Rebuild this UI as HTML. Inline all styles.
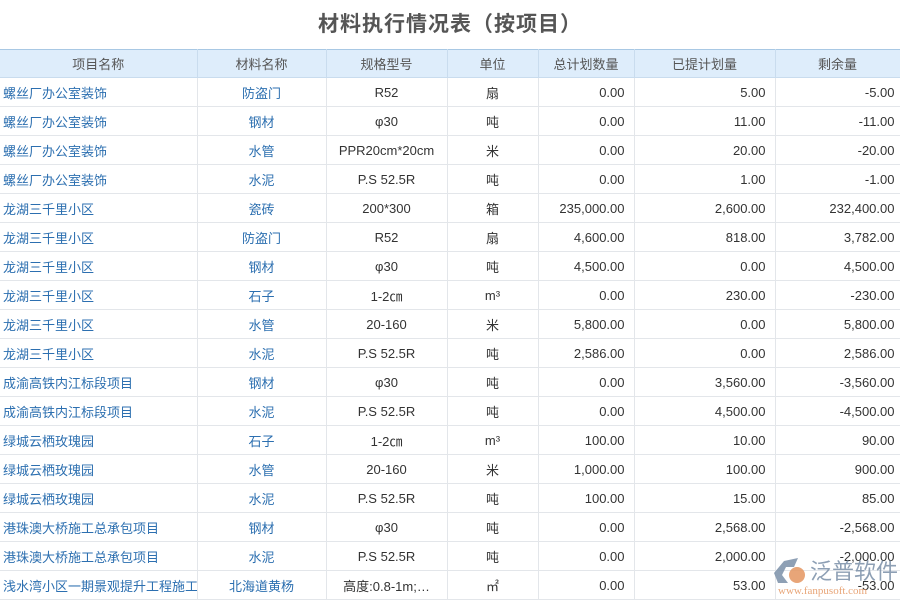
<!DOCTYPE html>
<html><head><meta charset="utf-8"><style>
*{margin:0;padding:0;box-sizing:border-box}
body{width:900px;height:600px;overflow:hidden;background:#fff;font-family:"Liberation Sans","Noto Sans CJK SC",sans-serif;position:relative}
h1{position:absolute;top:8px;left:0;width:900px;text-align:center;font-size:21px;font-weight:bold;color:#555;letter-spacing:1px}
table{position:absolute;top:49px;left:0;border-collapse:collapse;table-layout:fixed;width:900px;font-size:13px}
td,th{height:29px;border:1px solid #e3e6ea;white-space:nowrap;overflow:hidden;padding:0 4px;color:#333}
th{height:28px;background:#deedfb;font-weight:normal;color:#555;border-color:#c9dcee;border-top:1px solid #a8c8e4}
td:nth-child(1){color:#2c6fb0;text-align:left;padding-left:3px}
td:nth-child(2){color:#2c6fb0;text-align:center}
td:nth-child(3),td:nth-child(4){text-align:center}
td:nth-child(5),td:nth-child(6){text-align:right;padding-right:9px}
td:nth-child(7){text-align:right;padding-right:5px}
tr td:first-child,tr th:first-child{border-left:none}
.logo{position:absolute;left:770px;top:553px;width:130px;height:47px}
</style></head><body>
<h1>材料执行情况表（按项目）</h1>
<table>
<colgroup><col style="width:197px"><col style="width:129px"><col style="width:121px"><col style="width:91px"><col style="width:96px"><col style="width:141px"><col style="width:125px"></colgroup>
<tr><th>项目名称</th><th>材料名称</th><th>规格型号</th><th>单位</th><th>总计划数量</th><th>已提计划量</th><th>剩余量</th></tr>
<tr><td>螺丝厂办公室装饰</td><td>防盗门</td><td>R52</td><td>扇</td><td>0.00</td><td>5.00</td><td>-5.00</td></tr>
<tr><td>螺丝厂办公室装饰</td><td>钢材</td><td>φ30</td><td>吨</td><td>0.00</td><td>11.00</td><td>-11.00</td></tr>
<tr><td>螺丝厂办公室装饰</td><td>水管</td><td>PPR20cm*20cm</td><td>米</td><td>0.00</td><td>20.00</td><td>-20.00</td></tr>
<tr><td>螺丝厂办公室装饰</td><td>水泥</td><td>P.S 52.5R</td><td>吨</td><td>0.00</td><td>1.00</td><td>-1.00</td></tr>
<tr><td>龙湖三千里小区</td><td>瓷砖</td><td>200*300</td><td>箱</td><td>235,000.00</td><td>2,600.00</td><td>232,400.00</td></tr>
<tr><td>龙湖三千里小区</td><td>防盗门</td><td>R52</td><td>扇</td><td>4,600.00</td><td>818.00</td><td>3,782.00</td></tr>
<tr><td>龙湖三千里小区</td><td>钢材</td><td>φ30</td><td>吨</td><td>4,500.00</td><td>0.00</td><td>4,500.00</td></tr>
<tr><td>龙湖三千里小区</td><td>石子</td><td>1-2㎝</td><td>m³</td><td>0.00</td><td>230.00</td><td>-230.00</td></tr>
<tr><td>龙湖三千里小区</td><td>水管</td><td>20-160</td><td>米</td><td>5,800.00</td><td>0.00</td><td>5,800.00</td></tr>
<tr><td>龙湖三千里小区</td><td>水泥</td><td>P.S 52.5R</td><td>吨</td><td>2,586.00</td><td>0.00</td><td>2,586.00</td></tr>
<tr><td>成渝高铁内江标段项目</td><td>钢材</td><td>φ30</td><td>吨</td><td>0.00</td><td>3,560.00</td><td>-3,560.00</td></tr>
<tr><td>成渝高铁内江标段项目</td><td>水泥</td><td>P.S 52.5R</td><td>吨</td><td>0.00</td><td>4,500.00</td><td>-4,500.00</td></tr>
<tr><td>绿城云栖玫瑰园</td><td>石子</td><td>1-2㎝</td><td>m³</td><td>100.00</td><td>10.00</td><td>90.00</td></tr>
<tr><td>绿城云栖玫瑰园</td><td>水管</td><td>20-160</td><td>米</td><td>1,000.00</td><td>100.00</td><td>900.00</td></tr>
<tr><td>绿城云栖玫瑰园</td><td>水泥</td><td>P.S 52.5R</td><td>吨</td><td>100.00</td><td>15.00</td><td>85.00</td></tr>
<tr><td>港珠澳大桥施工总承包项目</td><td>钢材</td><td>φ30</td><td>吨</td><td>0.00</td><td>2,568.00</td><td>-2,568.00</td></tr>
<tr><td>港珠澳大桥施工总承包项目</td><td>水泥</td><td>P.S 52.5R</td><td>吨</td><td>0.00</td><td>2,000.00</td><td>-2,000.00</td></tr>
<tr><td>浅水湾小区一期景观提升工程施工</td><td>北海道黄杨</td><td>高度:0.8-1m;…</td><td>㎡</td><td>0.00</td><td>53.00</td><td>-53.00</td></tr>
</table>
<svg class="logo" viewBox="0 0 130 47">
<path d="M14 8 L28 5 L24 14 L16 14 L12 22 L18 30 L8 30 L4 20 Z" fill="#7a8fa8" opacity=".85"/>
<circle cx="27" cy="22" r="8" fill="#e49560" opacity=".85"/>
<text x="40" y="26" font-size="22" fill="#7a8fa8" opacity=".85" font-family="Noto Sans CJK SC,sans-serif">泛普软件</text>
<text x="8" y="41" font-size="11" fill="#e49560" opacity=".85" font-family="Liberation Serif,serif">www.fanpusoft.com</text>
</svg>
</body></html>
